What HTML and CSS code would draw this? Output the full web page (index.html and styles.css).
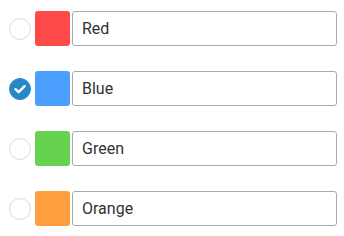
FILE: index.html
```html
<!DOCTYPE html>
<html lang="en">
<head>
  <meta charset="UTF-8" />
  <title>Colors</title>
  <link rel="stylesheet" href="styles.css">
</head>
<body>
<div class="list">
  <div class="row">
    <span class="radio"></span>
    <span class="swatch red"></span>
    <input class="name" type="text" value="Red" />
  </div>
  <div class="row">
    <span class="radio checked">
      <svg viewBox="0 0 22 22" width="22" height="22"><path d="M6.5 11.2 L9.6 14.2 L15.6 8.2" fill="none" stroke="#fff" stroke-width="2.4" stroke-linecap="round" stroke-linejoin="round"/></svg>
    </span>
    <span class="swatch blue"></span>
    <input class="name" type="text" value="Blue" />
  </div>
  <div class="row">
    <span class="radio"></span>
    <span class="swatch green"></span>
    <input class="name" type="text" value="Green" />
  </div>
  <div class="row">
    <span class="radio"></span>
    <span class="swatch orange"></span>
    <input class="name" type="text" value="Orange" />
  </div>
</div>
</body>
</html>
```

FILE: styles.css
```css
* { box-sizing: border-box; margin: 0; padding: 0; }

body {
  background: #ffffff;
  font-family: Roboto, "Liberation Sans", sans-serif;
}

.list {
  display: flex;
  flex-direction: column;
  gap: 25px;
  padding: 11px 7px 0 9px;
}

.row {
  display: flex;
  align-items: center;
  height: 35px;
}

.radio {
  width: 22px;
  height: 22px;
  border-radius: 50%;
  border: 1px solid #dcdad5;
  margin-right: 4px;
  display: flex;
}
.radio.checked {
  background: #2688c6;
  border-color: #2688c6;
}
.radio svg { margin: -1px; }

.swatch {
  width: 35px;
  height: 35px;
  border-radius: 3px;
  margin-right: 2px;
}
.swatch.red    { background: #ff4a4a; }
.swatch.blue   { background: #4a9fff; }
.swatch.green  { background: #67d24e; }
.swatch.orange { background: #ff9e3d; }

.name {
  flex: 1;
  height: 35px;
  border: 1px solid #aaaaaa;
  border-radius: 3px;
  padding: 0 9px;
  font-family: Roboto, "Liberation Sans", sans-serif;
  font-size: 16px;
  color: #333333;
  outline: none;
}
```
